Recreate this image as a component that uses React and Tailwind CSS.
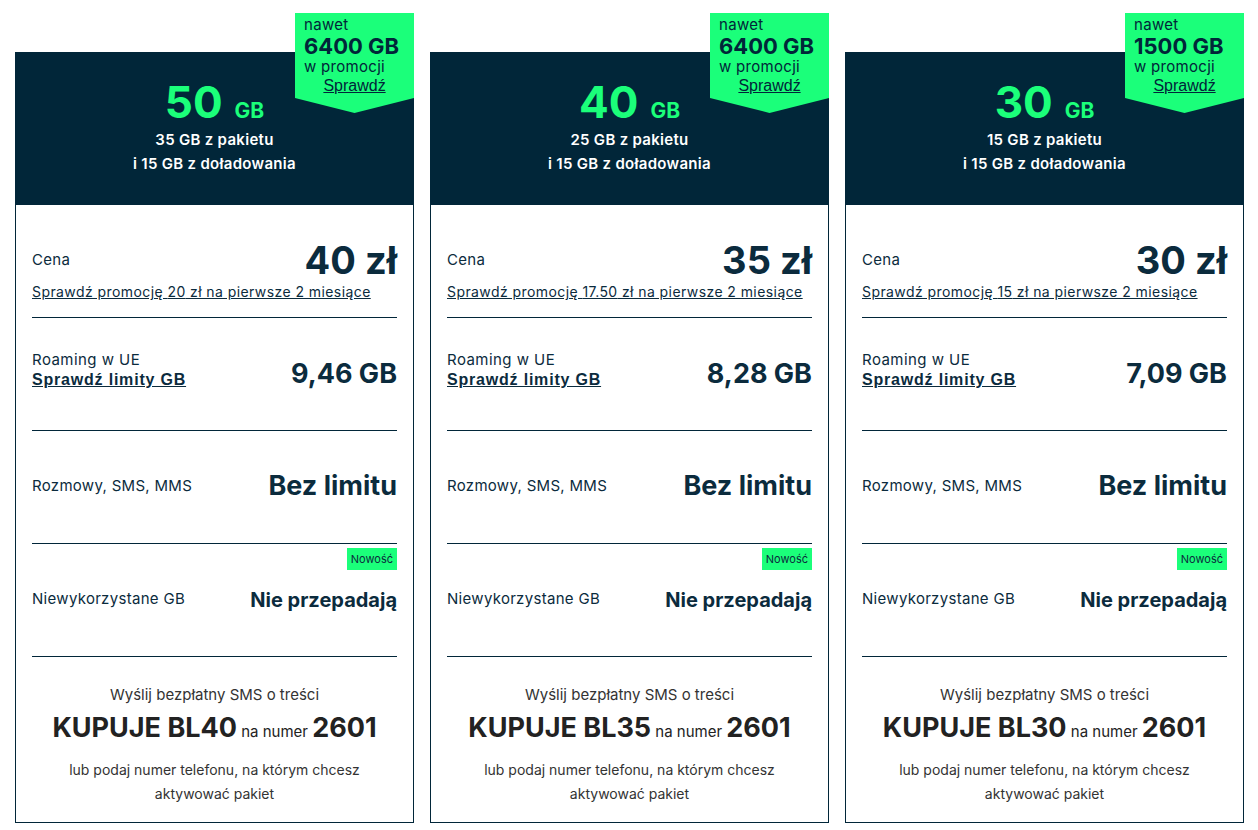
import React from "react";

const plans = [
  { gb: "50", promo: "6400 GB", base: "35", price: "40", promoPrice: "20", roaming: "9,46 GB", code: "BL40" },
  { gb: "40", promo: "6400 GB", base: "25", price: "35", promoPrice: "17.50", roaming: "8,28 GB", code: "BL35" },
  { gb: "30", promo: "1500 GB", base: "15", price: "30", promoPrice: "15", roaming: "7,09 GB", code: "BL30" },
];

function Card({ plan }) {
  return (
    <div className="relative mt-[39px] w-[399px] flex flex-col">
      {/* promo badge */}
      <div className="absolute top-[-39px] right-0 w-[119px] h-[100px] bg-[#1bff7a] text-[#012639] pl-[9px] pt-[3px] [clip-path:polygon(0_0,100%_0,100%_85%,50%_100%,0_85%)]">
        <div className="text-[15px] leading-[18px] tracking-[0.02em]">nawet</div>
        <div className="text-[22px] font-bold leading-[24px]">{plan.promo}</div>
        <div className="text-[15px] leading-[18px] tracking-[0.02em]">w promocji</div>
        <div className="text-center pr-[9px] text-[16px] leading-[20px] underline font-['Liberation_Sans',Arial,sans-serif]">
          Sprawdź
        </div>
      </div>

      {/* header */}
      <div className="bg-[#012639] h-[153px] flex flex-col items-center pt-[27px]">
        <div className="flex items-baseline gap-[12px] text-[#1bff7a] font-bold">
          <span className="text-[44px] leading-[46px]">{plan.gb}</span>
          <span className="text-[21px]">GB</span>
        </div>
        <div className="text-white text-[15px] font-semibold leading-[24px] tracking-[0.02em] text-center mt-[1px]">
          {plan.base} GB z pakietu
          <br />i 15 GB z doładowania
        </div>
      </div>

      {/* body */}
      <div className="border-x border-b border-[#012639] px-4 text-[#0b2b3d]">
        <div className="border-b border-[#012639] pt-[33px] pb-[15px]">
          <div className="flex justify-between items-center h-[44px]">
            <span className="text-[15px] tracking-[0.02em]">Cena</span>
            <span className="text-[38px] font-bold leading-none">{plan.price} zł</span>
          </div>
          <div className="h-[20px] text-[14px] underline leading-[20px] tracking-[0.03em]">
            Sprawdź promocję {plan.promoPrice} zł na pierwsze 2 miesiące
          </div>
        </div>

        <div className="border-b border-[#012639] h-[113px] flex justify-between items-center">
          <div className="pb-2">
            <div className="text-[15px] leading-[20px] tracking-[0.03em]">Roaming w UE</div>
            <div className="text-[16px] font-bold underline leading-[20px] tracking-[0.05em] font-['Liberation_Sans',Arial,sans-serif]">
              Sprawdź limity GB
            </div>
          </div>
          <span className="text-[27px] font-bold">{plan.roaming}</span>
        </div>

        <div className="border-b border-[#012639] h-[113px] flex justify-between items-center pb-[1px]">
          <span className="text-[15px] tracking-[0.02em]">Rozmowy, SMS, MMS</span>
          <span className="text-[27px] font-bold">Bez limitu</span>
        </div>

        <div className="relative border-b border-[#012639] h-[113px] flex justify-between items-center pb-[1px]">
          <span className="absolute top-[4px] right-0 bg-[#1bff7a] text-[11px] leading-[22px] px-[4px]">Nowość</span>
          <span className="text-[15px] tracking-[0.02em]">Niewykorzystane GB</span>
          <span className="text-[20px] font-bold">Nie przepadają</span>
        </div>

        <div className="h-[165px] flex flex-col items-center pt-[28px] text-[#333]">
          <div className="text-[15px] leading-[20px]">Wyślij bezpłatny SMS o treści</div>
          <div className="mt-[7px] text-[#222] leading-[32px]">
            <span className="text-[27px] font-bold">KUPUJE {plan.code}</span>
            <span className="text-[15px]"> na numer </span>
            <span className="text-[27px] font-bold">2601</span>
          </div>
          <div className="mt-[10px] text-[14px] leading-[24px] text-center">
            lub podaj numer telefonu, na którym chcesz
            <br />
            aktywować pakiet
          </div>
        </div>
      </div>
    </div>
  );
}

export default function App() {
  return (
    <div className="w-[1258px] h-[830px] bg-white pl-[15px] pt-[13px] flex gap-[16px] font-['Inter','Noto_Sans',sans-serif] overflow-hidden">
      {plans.map((p) => (
        <Card key={p.code} plan={p} />
      ))}
    </div>
  );
}
